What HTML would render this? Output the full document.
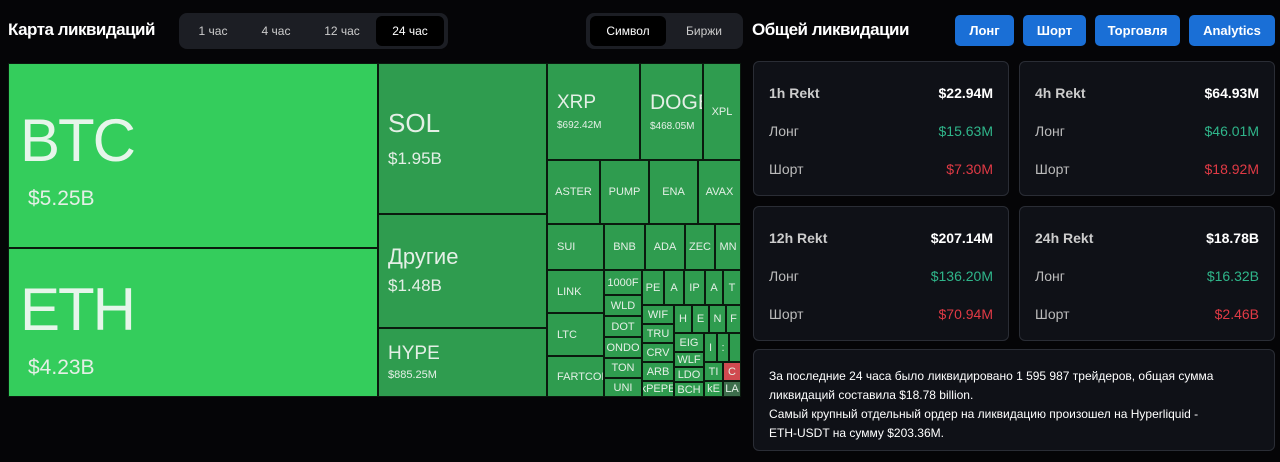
<!DOCTYPE html>
<html><head><meta charset="utf-8"><style>
*{margin:0;padding:0;box-sizing:border-box}
body{width:1280px;height:462px;background:#050507;font-family:"Liberation Sans","Noto Sans CJK SC",sans-serif;color:#eee;position:relative;overflow:hidden}
.a{position:absolute}
.c{position:absolute;background:#2f9c4f;border:1px solid #0a1a0e;color:#e4efe6;overflow:hidden;white-space:nowrap;font-size:11px;display:flex;align-items:center;justify-content:center}
.c.l{justify-content:flex-start;padding-left:9px}
.big{background:#34cd5c;border-color:#0a1a0e}
.tab{position:absolute;font-size:12px;color:#ccc;text-align:center;line-height:30px}
.btn{position:absolute;top:15px;height:31px;background:#1a6fd6;border-radius:5px;color:#fff;font-size:13px;font-weight:bold;text-align:center;line-height:31px}
.card{position:absolute;width:256px;height:135px;background:#0f1117;border:1px solid #2a2d35;border-radius:6px;font-size:14px}
.card div{position:absolute;left:15px;right:15px;display:flex;justify-content:space-between}
.card b{color:#fff}
.g{color:#2fb58a}.r{color:#e03a45}
.k{color:#bbb}
.t{color:#ccc;font-weight:bold}
</style></head><body>
<div class="a" style="left:8px;top:20px;font-size:17px;font-weight:bold;color:#fff;letter-spacing:-0.5px">Карта ликвидаций</div>
<div class="a" style="left:179px;top:13px;width:269px;height:36px;background:#1c1e24;border-radius:8px"></div>
<div class="tab" style="left:187px;top:16px;width:52px">1 час</div>
<div class="tab" style="left:246px;top:16px;width:60px">4 час</div>
<div class="tab" style="left:312px;top:16px;width:60px">12 час</div>
<div class="tab" style="left:376px;top:16px;width:68px;background:#000;border-radius:6px;color:#fff">24 час</div>
<div class="a" style="left:586px;top:13px;width:157px;height:36px;background:#1c1e24;border-radius:8px"></div>
<div class="tab" style="left:590px;top:16px;width:76px;background:#000;border-radius:6px;color:#fff">Символ</div>
<div class="tab" style="left:668px;top:16px;width:72px">Биржи</div>

<div class="c big l" style="left:8px;top:63px;width:370px;height:185px;display:block;padding-left:11px"><div style="font-size:60px;margin-top:42px;color:#e6f5ea;letter-spacing:-2px">BTC</div><div style="font-size:21px;margin-top:12px;padding-left:8px">$5.25B</div></div>
<div class="c big l" style="left:8px;top:248px;width:370px;height:149px;display:block;padding-left:11px"><div style="font-size:60px;margin-top:26px;color:#e6f5ea;letter-spacing:-2px">ETH</div><div style="font-size:21px;margin-top:12px;padding-left:8px">$4.23B</div></div>
<div class="c l" style="left:378px;top:63px;width:169px;height:151px;display:block"><div style="font-size:26px;margin-top:44px">SOL</div><div style="font-size:17px;margin-top:10px">$1.95B</div></div>
<div class="c l" style="left:378px;top:214px;width:169px;height:114px;display:block"><div style="font-size:22px;margin-top:29px">Другие</div><div style="font-size:17px;margin-top:6px">$1.48B</div></div>
<div class="c l" style="left:378px;top:328px;width:169px;height:69px;display:block"><div style="font-size:19px;margin-top:14px">HYPE</div><div style="font-size:11px;margin-top:4px">$885.25M</div></div>
<div class="c l" style="left:547px;top:63px;width:93px;height:97px;display:block"><div style="font-size:19px;margin-top:28px">XRP</div><div style="font-size:10px;margin-top:6px">$692.42M</div></div>
<div class="c l" style="left:640px;top:63px;width:63px;height:97px;display:block"><div style="font-size:21px;margin-top:27px">DOGE</div><div style="font-size:10px;margin-top:6px">$468.05M</div></div>
<div class="c" style="left:703px;top:63px;width:38px;height:97px">XPL</div>
<div class="c" style="left:547px;top:160px;width:53px;height:64px">ASTER</div>
<div class="c" style="left:600px;top:160px;width:49px;height:64px">PUMP</div>
<div class="c" style="left:649px;top:160px;width:49px;height:64px">ENA</div>
<div class="c" style="left:698px;top:160px;width:43px;height:64px">AVAX</div>
<div class="c l" style="left:547px;top:224px;width:57px;height:46px">SUI</div>
<div class="c" style="left:604px;top:224px;width:41px;height:46px">BNB</div>
<div class="c" style="left:645px;top:224px;width:40px;height:46px">ADA</div>
<div class="c" style="left:685px;top:224px;width:30px;height:46px">ZEC</div>
<div class="c" style="left:715px;top:224px;width:26px;height:46px">MN</div>
<div class="c l" style="left:547px;top:270px;width:57px;height:43px">LINK</div>
<div class="c l" style="left:547px;top:313px;width:57px;height:43px">LTC</div>
<div class="c l" style="left:547px;top:356px;width:57px;height:41px">FARTCOIN</div>
<div class="c" style="left:604px;top:270px;width:38px;height:25px">1000F</div>
<div class="c" style="left:604px;top:295px;width:38px;height:21px">WLD</div>
<div class="c" style="left:604px;top:316px;width:38px;height:21px">DOT</div>
<div class="c" style="left:604px;top:337px;width:38px;height:21px">ONDO</div>
<div class="c" style="left:604px;top:358px;width:38px;height:20px">TON</div>
<div class="c" style="left:604px;top:378px;width:38px;height:19px">UNI</div>
<div class="c" style="left:642px;top:270px;width:22px;height:35px">PE</div>
<div class="c" style="left:664px;top:270px;width:20px;height:35px">A</div>
<div class="c" style="left:684px;top:270px;width:21px;height:35px">IP</div>
<div class="c" style="left:705px;top:270px;width:18px;height:35px">A</div>
<div class="c" style="left:723px;top:270px;width:18px;height:35px">T</div>
<div class="c" style="left:642px;top:305px;width:32px;height:19px">WIF</div>
<div class="c" style="left:642px;top:324px;width:32px;height:19px">TRU</div>
<div class="c" style="left:642px;top:343px;width:32px;height:19px">CRV</div>
<div class="c" style="left:642px;top:362px;width:32px;height:19px">ARB</div>
<div class="c" style="left:642px;top:381px;width:32px;height:16px">kPEPE</div>
<div class="c" style="left:674px;top:305px;width:18px;height:28px">H</div>
<div class="c" style="left:692px;top:305px;width:17px;height:28px">E</div>
<div class="c" style="left:709px;top:305px;width:17px;height:28px">N</div>
<div class="c" style="left:726px;top:305px;width:15px;height:28px">F</div>
<div class="c" style="left:674px;top:333px;width:30px;height:19px">EIG</div>
<div class="c" style="left:674px;top:352px;width:30px;height:15px">WLF</div>
<div class="c" style="left:674px;top:367px;width:30px;height:15px">LDO</div>
<div class="c" style="left:674px;top:382px;width:30px;height:15px">BCH</div>
<div class="c" style="left:704px;top:333px;width:13px;height:29px">I</div>
<div class="c" style="left:717px;top:333px;width:12px;height:29px">:</div>
<div class="c" style="left:729px;top:333px;width:12px;height:29px"></div>
<div class="c" style="left:704px;top:362px;width:19px;height:19px">TI</div>
<div class="c" style="left:723px;top:362px;width:18px;height:19px;background:#d04a50">C</div>
<div class="c" style="left:704px;top:381px;width:19px;height:16px">kE</div>
<div class="c" style="left:723px;top:381px;width:18px;height:16px;background:#3d6e4c">LA</div>

<div class="a" style="left:752px;top:20px;font-size:17px;font-weight:bold;color:#fff;letter-spacing:-0.5px">Общей ликвидации</div>
<div class="btn" style="left:955px;width:59px">Лонг</div>
<div class="btn" style="left:1023px;width:63px">Шорт</div>
<div class="btn" style="left:1095px;width:85px">Торговля</div>
<div class="btn" style="left:1189px;width:86px">Analytics</div>

<div class="card" style="left:753px;top:61px"><div style="top:23px"><span class="t">1h Rekt</span><b>$22.94M</b></div><div style="top:61px"><span class="k">Лонг</span><span class="g">$15.63M</span></div><div style="top:99px"><span class="k">Шорт</span><span class="r">$7.30M</span></div></div>
<div class="card" style="left:1019px;top:61px"><div style="top:23px"><span class="t">4h Rekt</span><b>$64.93M</b></div><div style="top:61px"><span class="k">Лонг</span><span class="g">$46.01M</span></div><div style="top:99px"><span class="k">Шорт</span><span class="r">$18.92M</span></div></div>
<div class="card" style="left:753px;top:206px"><div style="top:23px"><span class="t">12h Rekt</span><b>$207.14M</b></div><div style="top:61px"><span class="k">Лонг</span><span class="g">$136.20M</span></div><div style="top:99px"><span class="k">Шорт</span><span class="r">$70.94M</span></div></div>
<div class="card" style="left:1019px;top:206px"><div style="top:23px"><span class="t">24h Rekt</span><b>$18.78B</b></div><div style="top:61px"><span class="k">Лонг</span><span class="g">$16.32B</span></div><div style="top:99px"><span class="k">Шорт</span><span class="r">$2.46B</span></div></div>
<div class="a" style="left:753px;top:349px;width:522px;height:102px;background:#0f1117;border:1px solid #2a2d35;border-radius:6px;padding:17px 15px;font-size:12px;line-height:19px;color:#fff">За последние 24 часа было ликвидировано 1 595 987 трейдеров, общая сумма<br>ликвидаций составила $18.78 billion.<br>Самый крупный отдельный ордер на ликвидацию произошел на Hyperliquid -<br>ETH-USDT на сумму $203.36M.</div>
</body></html>
